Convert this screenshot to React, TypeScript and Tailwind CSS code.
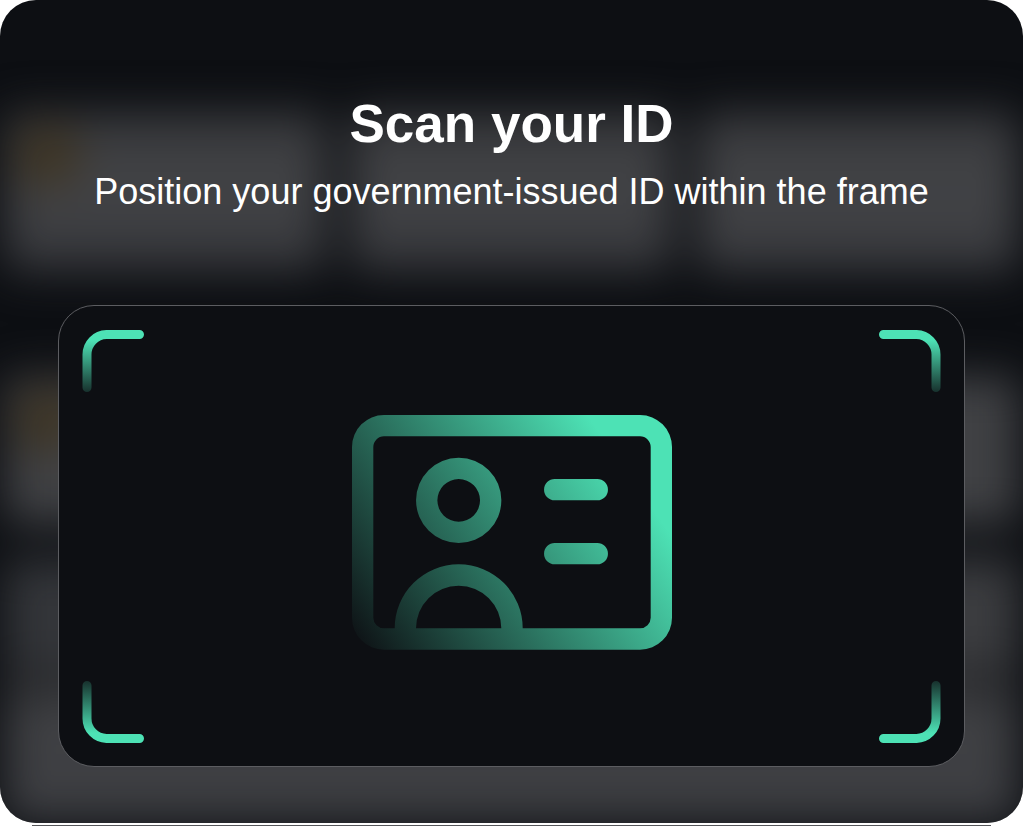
function Corner({ className, id }: { className: string; id: string }) {
  return (
    <svg viewBox="0 0 62 62" className={`size-[62px] ${className}`} fill="none" aria-hidden="true">
      <defs>
        <linearGradient id={id} x1="0" y1="10" x2="0" y2="72" gradientUnits="userSpaceOnUse">
          <stop stopColor="#4de2b5" />
          <stop offset="1" stopColor="#4de2b5" stopOpacity="0" />
        </linearGradient>
      </defs>
      <path d="M57.5 4.500H24.500A20 20 0 0 0 5 24.500V57.500" stroke={`url(#${id})`} strokeWidth="9" strokeLinecap="round" />
    </svg>
  );
}

function IdCard() {
  return (
    <svg viewBox="0 0 320 235" className="h-[235px] w-[320px]" fill="none" role="img" aria-label="ID card">
      <defs>
        <linearGradient id="id-card" x1="276" y1="58" x2="18" y2="238" gradientUnits="userSpaceOnUse">
          <stop stopColor="#4de2b5" />
          <stop offset="1" stopColor="#4de2b5" stopOpacity="0.03" />
        </linearGradient>
      </defs>
      <path
        fill="url(#id-card)"
        fillRule="evenodd"
        d="M32 0H288A32 32 0 0 1 320 32V202.700A32 32 0 0 1 288 234.700H32A32 32 0 0 1 0 202.700V32A32 32 0 0 1 32 0ZM32 21.300A10.700 10.700 0 0 0 21.300 32V202.700A10.700 10.700 0 0 0 32 213.300H42.700A64 64 0 0 1 170.700 213.300H288A10.700 10.700 0 0 0 298.700 202.700V32A10.700 10.700 0 0 0 288 21.300ZM64 213.300H149.300A42.650 42.650 0 0 0 64 213.300ZM106.700 42.700A42.650 42.650 0 0 1 106.700 128A42.650 42.650 0 0 1 106.700 42.700ZM106.700 64A21.350 21.350 0 0 0 106.700 106.700A21.350 21.350 0 0 0 106.700 64ZM202.700 64H245.300A10.650 10.650 0 0 1 245.300 85.300H202.700A10.650 10.650 0 0 1 202.700 64ZM202.700 128H245.300A10.650 10.650 0 0 1 245.300 149.300H202.700A10.650 10.650 0 0 1 202.700 128Z"
      />
    </svg>
  );
}

function Backdrop() {
  return (
    <div aria-hidden="true" className="absolute inset-0 flex flex-col px-1 pt-28 blur-[22px]">
      <div className="grid h-40 grid-cols-3 gap-6">
        <div className="rounded-xl bg-linear-to-b from-[#38393c] via-[#434447] to-[#35363a] p-3">
          <div className="size-16 rounded-full bg-[#3e3422]" />
        </div>
        <div className="rounded-xl bg-linear-to-b from-[#38393c] via-[#434447] to-[#35363a]" />
        <div className="rounded-xl bg-linear-to-b from-[#38393c] via-[#434447] to-[#38393d]" />
      </div>
      <div className="mt-[104px] h-[148px] rounded-xl bg-[#404144] p-3">
        <div className="size-16 rounded-full bg-[#3e3422]" />
      </div>
      <div className="mt-9 h-[104px] bg-linear-to-r from-[#333539] to-[#3c3d40]" />
      <div className="h-9 bg-[#2a2b2e]" />
      <div className="flex-1 bg-linear-to-b from-[#404144] to-[#3d3e42]" />
    </div>
  );
}

export default function App() {
  return (
    <div className="flex min-h-screen flex-col gap-0.5 overflow-hidden bg-white pr-px font-['Liberation_Sans',Arial,sans-serif]">
      <main className="relative flex flex-1 flex-col overflow-hidden rounded-[36px] bg-[#0d0f13] px-[58px] pb-14 pt-24 text-white">
        <Backdrop />
        <header className="relative text-center">
          <h1 className="text-[53px] font-bold leading-[56px]">Scan your ID</h1>
          <p className="mt-3 whitespace-nowrap text-4xl leading-[56px]">
            Position your government-issued ID within the frame
          </p>
        </header>
        <section
          aria-label="Scan frame"
          className="relative mt-[85px] flex flex-1 flex-col justify-between rounded-[36px] border border-[#5c5d61] bg-[#0d0f13] px-[23px] pb-[23px] pt-6"
        >
          <div className="flex justify-between">
            <Corner id="corner-tl" className="" />
            <Corner id="corner-tr" className="-scale-x-100" />
          </div>
          <div className="flex justify-center pb-2">
            <IdCard />
          </div>
          <div className="flex justify-between">
            <Corner id="corner-bl" className="-scale-y-100" />
            <Corner id="corner-br" className="-scale-100" />
          </div>
        </section>
      </main>
      <div className="mx-8 h-px bg-[#55565a]" />
    </div>
  );
}
